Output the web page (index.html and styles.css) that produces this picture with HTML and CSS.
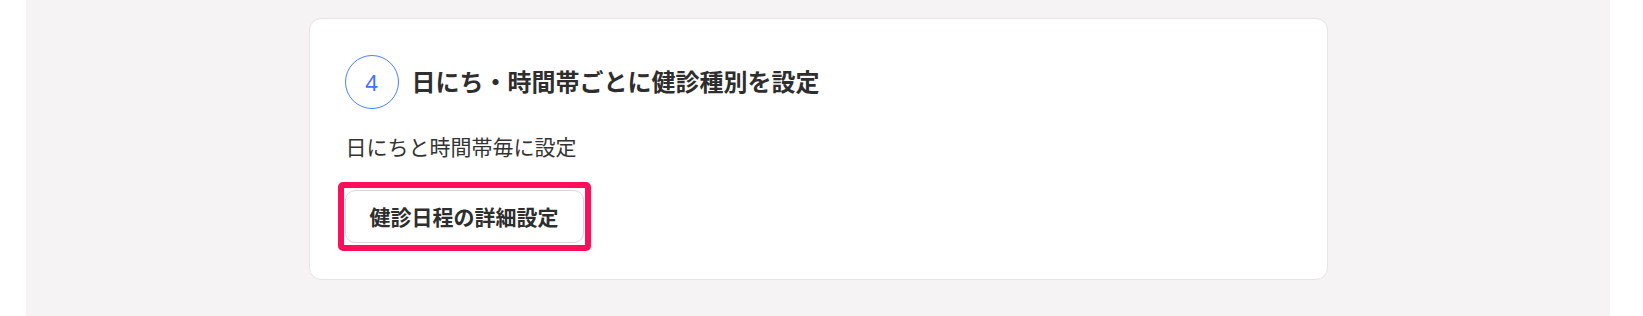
FILE: index.html
```html
<!DOCTYPE html>
<html lang="ja">
<head>
<meta charset="utf-8">
<title>健診日程</title>
<link rel="stylesheet" href="styles.css">
</head>
<body>
<main class="page">
  <section class="card">
    <div class="step-header">
      <span class="step-num">4</span>
      <h2 class="step-title">日にち・時間帯ごとに健診種別を設定</h2>
    </div>
    <p class="step-desc">日にちと時間帯毎に設定</p>
    <div class="action">
      <button class="btn" type="button">健診日程の詳細設定</button>
    </div>
  </section>
</main>
</body>
</html>
```

FILE: styles.css
```css
html, body {
  margin: 0;
  padding: 0;
  background: #ffffff;
}

body {
  font-family: "Noto Sans CJK JP", "Noto Sans", sans-serif;
  color: #333333;
}

.page {
  box-sizing: border-box;
  margin-left: 26px;
  width: 1584px;
  min-height: 316px;
  background: #f5f3f4;
  padding-top: 18px;
}

.card {
  box-sizing: border-box;
  width: 1019px;
  margin: 0 auto;
  background: #ffffff;
  border: 1px solid #e6e4e5;
  border-radius: 12px;
  padding: 36px 36px 36px 35px;
}

.step-header {
  display: flex;
  align-items: center;
  gap: 13px;
}

.step-num {
  box-sizing: border-box;
  width: 54px;
  height: 54px;
  flex: none;
  border: 1.4px solid #4a7ff6;
  border-radius: 50%;
  display: flex;
  align-items: center;
  justify-content: center;
  font-family: "Noto Sans", sans-serif;
  font-size: 22px;
  color: #3f73ee;
  line-height: 1;
}

.step-title {
  margin: 0 0 3px 0;
  font-size: 24px;
  font-weight: 700;
  color: #2e2e2e;
  line-height: 1.3;
}

.step-desc {
  margin: 22px 0 0 1px;
  font-size: 21px;
  line-height: 31.5px;
  color: #333333;
}

.action {
  margin-top: 27px;
  display: flex;
}

.btn {
  position: relative;
  box-sizing: border-box;
  height: 53px;
  padding: 0 24px;
  border: 1px solid #d8d8d8;
  border-radius: 10px;
  background: #ffffff;
  font-family: "Noto Sans CJK JP", "Noto Sans", sans-serif;
  font-size: 21px;
  font-weight: 700;
  color: #2e2e2e;
  line-height: 1;
  cursor: pointer;
}

.btn::after {
  content: "";
  position: absolute;
  left: -8px;
  right: -8px;
  top: -9px;
  bottom: -9px;
  border: 6.5px solid #ff0f5a;
  border-radius: 5px;
  pointer-events: none;
}
```
